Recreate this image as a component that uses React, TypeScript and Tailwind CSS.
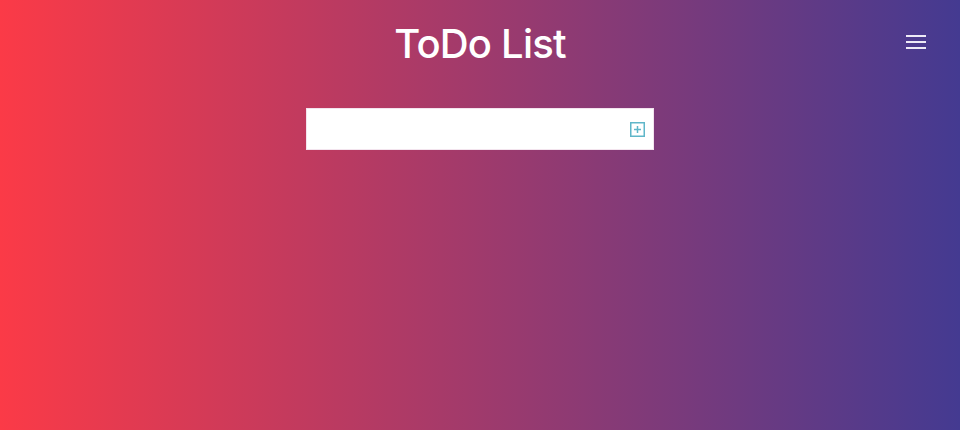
import React from 'react';

const App: React.FC = () => {
  return (
    <div
      className="w-[960px] h-[430px] bg-linear-to-r/srgb from-[#fb3a47] to-[#443a91] flex flex-col items-center"
      style={{ fontFamily: '"Inter", "Open Sans", sans-serif' }}
    >
      <header className="w-full relative flex justify-center pt-[18px]">
        <h1 className="text-white text-[40px] leading-[52px] font-medium tracking-[-0.8px]">ToDo List</h1>
        <button className="absolute right-[34px] top-[35px] flex flex-col gap-[4px]" aria-label="menu">
          <span className="block w-[20px] h-[2px] bg-[#eeeaf7]" />
          <span className="block w-[20px] h-[2px] bg-[#eeeaf7]" />
          <span className="block w-[20px] h-[2px] bg-[#eeeaf7]" />
        </button>
      </header>

      <form className="mt-[38px] w-[348px] h-[42px] bg-white border border-[#f3e4ee] flex items-center">
        <input className="flex-1 h-full px-3 outline-none text-sm text-gray-700 bg-transparent" />
        <button type="button" className="mr-[8px] text-[#5fb6c9] flex" aria-label="add">
          <svg width="15" height="15" viewBox="0 0 15 15" fill="none" stroke="currentColor" strokeWidth="1.5">
            <rect x="0.75" y="0.75" width="13.5" height="13.5" />
            <path d="M7.5 4v7M4 7.5h7" />
          </svg>
        </button>
      </form>
    </div>
  );
};

export default App;
